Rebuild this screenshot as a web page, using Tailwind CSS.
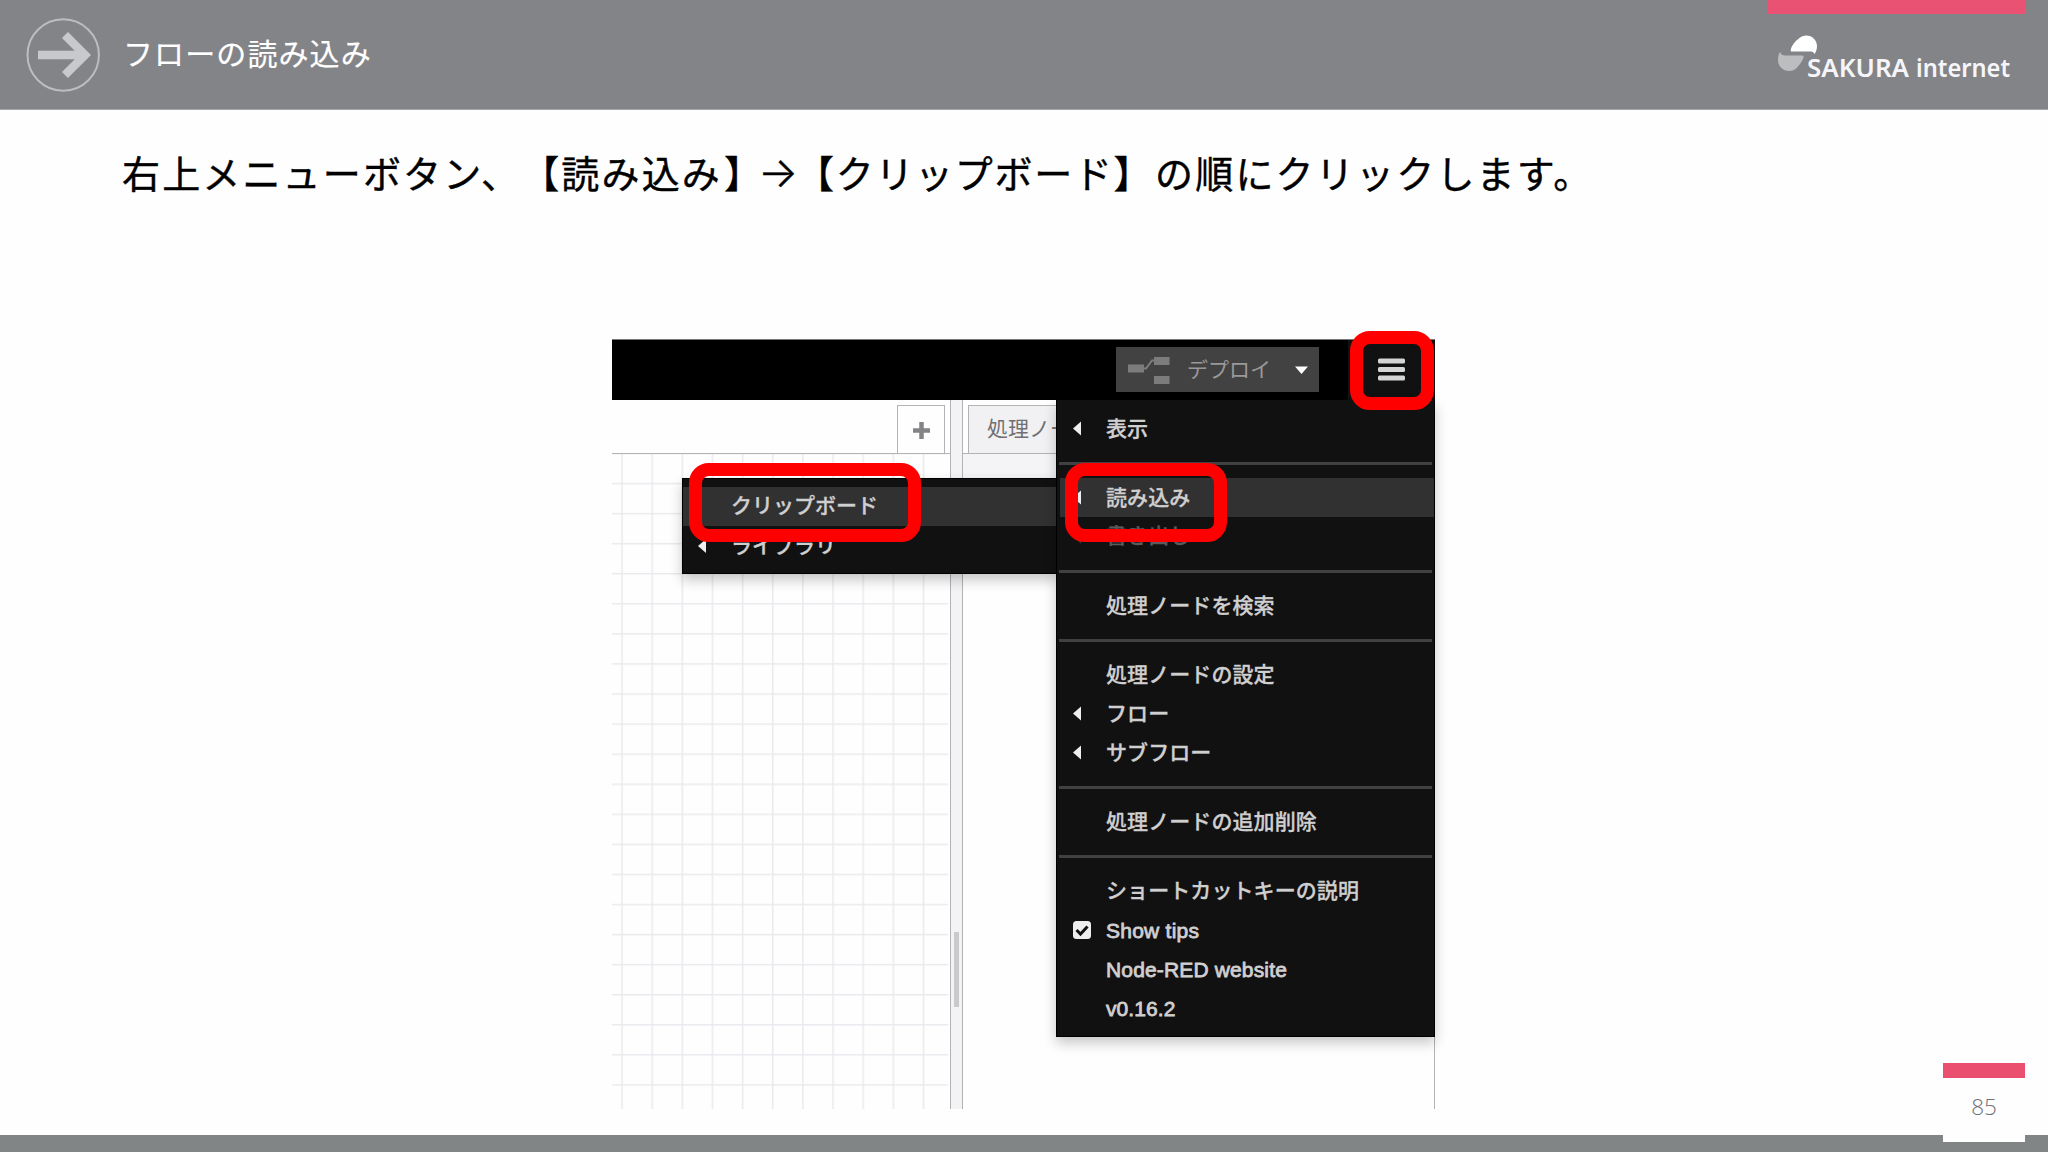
<!DOCTYPE html>
<html lang="ja">
<head>
<meta charset="utf-8">
<title>フローの読み込み</title>
<script src="https://cdn.jsdelivr.net/npm/@tailwindcss/browser@4"></script>
</head>
<body class="w-[2048px] h-[1152px] overflow-hidden bg-[#fefefe] font-['Noto_Sans_CJK_JP',sans-serif]">
<div class="relative flex flex-col w-[2048px] h-[1152px]">

  <header class="flex h-[110px] shrink-0 justify-between border-b border-[#a5a6a9] bg-[#838488] pl-[26px] pr-[22px]">
    <div class="flex items-center">
      <svg class="size-[75px]" viewBox="0 0 75 75" fill="none">
        <circle cx="37.200" cy="38" r="35.700" stroke="#bcbdc0" stroke-width="2"/>
        <path d="M12 38H58" stroke="#c8c9cc" stroke-width="8.500"/>
        <path d="M39 18L59 38L39 58" stroke="#c8c9cc" stroke-width="8.500"/>
      </svg>
      <h1 class="mb-[5px] ml-[22px] text-[30px] leading-[40px] tracking-[1.100px] text-white [-webkit-text-stroke:0.200px_#fff]">フローの読み込み</h1>
    </div>
    <div class="flex w-[259px] flex-col">
      <div class="h-[14px] bg-[#ea5273]"></div>
      <svg class="h-[70px] w-[259px]" viewBox="1767 14 259 70">
        <path d="M1791 51.500C1789.500 47 1799 35.500 1806 35.500C1812.500 35.500 1817 40.500 1817 46C1817 49.500 1816 52 1814.500 54C1813.500 51.800 1812.500 51.500 1810 51.500Z" fill="#fff"/>
        <path d="M1780 52C1781 54.500 1782.500 55.500 1785 55.500H1801.500C1804.500 55.500 1804 57.500 1802.500 60C1799 66 1795.500 71 1789.500 71C1783 71 1778 66 1778 60.500C1778 57 1778.500 54 1780 52Z" fill="#bcbdbf"/>
        <g font-family="Noto Sans" font-weight="600" font-size="24.500" fill="#f6f6fa">
          <text x="1807" y="77" textLength="102" lengthAdjust="spacingAndGlyphs">SAKURA</text>
          <text x="1916" y="77" textLength="94" lengthAdjust="spacingAndGlyphs">internet</text>
        </g>
      </svg>
    </div>
  </header>

  <main class="flex flex-1 flex-col">
    <p class="mt-[34px] ml-[122px] flex h-[56px] items-center text-[38px] leading-[56px] whitespace-nowrap text-black [-webkit-text-stroke:0.400px_#000] [text-spacing-trim:space-all]">
      <span class="w-[602px] tracking-[2.150px]">右上メニューボタン、【読み込み</span>
      <span class="w-[34px] [font-feature-settings:'halt']">】</span>
      <span class="w-[38px] font-['Inter',sans-serif] text-[42px] font-light">→</span>
      <span class="w-[359px] tracking-[1.700px]">【クリップボード】</span>
      <span class="tracking-[2.200px]">の順にクリックします。</span>
    </p>

    <!-- editor window -->
    <section class="relative mt-[139px] ml-[612px] flex h-[770px] w-[823px] flex-col overflow-visible">
      <div class="flex h-[61px] shrink-0 items-start justify-end border-t border-[#777] bg-black">
        <div class="mt-[7px] flex h-[45px] w-[203px] items-center bg-[#434243]">
          <svg class="ml-[11px] h-[28px] w-[43px]" viewBox="0 0 43 28">
            <path d="M15 12.500H19L25 4.500H28" fill="none" stroke="#7d7c7d" stroke-width="2"/>
            <path d="M1 8.500H17V16.500H1ZM27 1H42.500V9H27ZM27 20H42.500V28H27Z" fill="#7d7c7d"/>
          </svg>
          <span class="mb-[2px] ml-[17px] w-[86px] text-[21px] leading-[43px] text-[#9a999a]">デプロイ</span>
          <svg class="ml-[22px] h-[8px] w-[13px]" viewBox="0 0 13 8"><path d="M0 0.500H13L6.500 8Z" fill="#fff"/></svg>
        </div>
        <div class="ml-[29px] flex h-[60px] w-[87px] items-center justify-center bg-[#121112]">
          <svg class="h-[24px] w-[27px]" viewBox="0 0 27 24" fill="#d5d5d5"><rect y="0.500" width="27" height="5" rx="1.500"/><rect y="9" width="27" height="5" rx="1.500"/><rect y="17.500" width="27" height="5" rx="1.500"/></svg>
        </div>
      </div>

      <div class="flex flex-1">
        <div class="flex w-[339px] flex-col border-r border-[#b3b2b5]">
          <div class="flex h-[54px] items-end justify-end border-b border-[#b3b2b5] pr-[5px]">
            <div class="flex h-[48px] w-[48px] items-center justify-center border border-b-0 border-[#b3b2b5]">
              <svg class="mt-[2px] size-[17px]" viewBox="0 0 17 17"><path d="M8.500 0V17M0 8.500H17" stroke="#848386" stroke-width="4.500"/></svg>
            </div>
          </div>
          <svg class="h-[655px] w-[336px]">
            <defs><pattern id="grid" x="9.200" y="28.800" width="30.150" height="30.070" patternUnits="userSpaceOnUse"><path d="M0.800 0V30.100M0 0.800H30.200" stroke="#ebe9ed" stroke-width="1.500"/></pattern></defs>
            <rect width="336" height="655" fill="url(#grid)"/>
          </svg>
        </div>
        <div class="flex w-[11px] items-start justify-center bg-[#f3f2f4] pt-[532px]">
          <div class="h-[75px] w-[5px] bg-[#cac9cb]"></div>
        </div>
        <div class="flex flex-1 flex-col border-x border-[#b3b2b5]">
          <div class="flex h-[54px] items-end border-b border-[#b3b2b5] pl-[5px]">
            <div class="h-[48px] w-[120px] border border-b-0 border-[#b3b2b5] bg-[#f1f0f2] pl-[18px] text-[21px] leading-[42px] whitespace-nowrap text-[#707073]">処理ノード</div>
          </div>
          <div class="h-[50px] bg-[#f4f3f5]"></div>
        </div>
      </div>

      <!-- submenu -->
      <ul class="absolute top-[139px] left-[70px] h-[96px] w-[377px] border border-black bg-[#121112] pt-[8px] text-[21px] leading-[35px] font-medium text-[#d0cfd0] shadow-[0_6px_12px_rgba(0,0,0,0.22)] [-webkit-text-stroke:0.300px_#d0cfd0]">
        <li class="h-[39px] bg-[#323132] pl-[48px]">クリップボード</li>
        <li class="flex h-[39px] items-center pl-[15px]"><svg class="mr-[25px] h-[14px] w-[8px]" viewBox="0 0 8 14"><path d="M8 0V14L0 7Z" fill="#eee"/></svg><span class="pb-[2px]">ライブラリ</span></li>
      </ul>

      <!-- main menu -->
      <ul class="absolute top-[61px] left-[444px] flex h-[637px] w-[379px] flex-col border border-t-0 border-black bg-[#121112] pt-[9px] text-[21px] leading-[37px] font-medium tracking-[0.080px] whitespace-nowrap text-[#d0cfd0] shadow-[0_6px_12px_rgba(0,0,0,0.22)] [-webkit-text-stroke:0.300px_currentColor]">
        <li class="flex h-[39px] items-center pl-[16px]"><svg class="mr-[25px] h-[15px] w-[8px]" viewBox="0 0 8 14"><path d="M8 0V14L0 7Z" fill="#eee"/></svg><span class="pb-[2px]">表示</span></li>
        <li class="flex h-[30px] items-center px-[2px]"><hr class="h-[3px] w-full border-0 bg-[#414042]"></li>
        <li class="ml-[3px] flex h-[39px] items-center bg-[#323132] pl-[13px]"><svg class="mr-[25px] h-[15px] w-[8px]" viewBox="0 0 8 14"><path d="M8 0V14L0 7Z" fill="#eee"/></svg><span class="pb-[2px]">読み込み</span></li>
        <li class="flex h-[39px] items-center pl-[16px] text-[#5c5b5c]"><svg class="mr-[25px] h-[15px] w-[8px]" viewBox="0 0 8 14"><path d="M8 0V14L0 7Z" fill="#444"/></svg><span class="pb-[4px]">書き出し</span></li>
        <li class="flex h-[30px] items-center px-[2px]"><hr class="h-[3px] w-full border-0 bg-[#414042]"></li>
        <li class="h-[39px] pl-[49px]">処理ノードを検索</li>
        <li class="flex h-[30px] items-center px-[2px]"><hr class="h-[3px] w-full border-0 bg-[#414042]"></li>
        <li class="h-[39px] pl-[49px]">処理ノードの設定</li>
        <li class="flex h-[39px] items-center pl-[16px]"><svg class="mr-[25px] h-[15px] w-[8px]" viewBox="0 0 8 14"><path d="M8 0V14L0 7Z" fill="#eee"/></svg><span class="pb-[2px]">フロー</span></li>
        <li class="flex h-[39px] items-center pl-[16px]"><svg class="mr-[25px] h-[15px] w-[8px]" viewBox="0 0 8 14"><path d="M8 0V14L0 7Z" fill="#eee"/></svg><span class="pb-[2px]">サブフロー</span></li>
        <li class="flex h-[30px] items-center px-[2px]"><hr class="h-[3px] w-full border-0 bg-[#414042]"></li>
        <li class="h-[39px] pl-[49px]">処理ノードの追加削除</li>
        <li class="flex h-[30px] items-center px-[2px]"><hr class="h-[3px] w-full border-0 bg-[#414042]"></li>
        <li class="h-[39px] pl-[49px]">ショートカットキーの説明</li>
        <li class="flex h-[39px] items-center pl-[16px] font-['Liberation_Sans',sans-serif] font-normal tracking-[0.250px] [-webkit-text-stroke:0.800px_#d0cfd0]">
          <svg class="mr-[15px] size-[18px]" viewBox="0 0 18 18"><rect width="18" height="18" rx="3.500" fill="#efeeef"/><path d="M3.500 9L7.500 13L14.500 5.500" fill="none" stroke="#121112" stroke-width="3"/></svg><span class="pt-[2px]">Show tips</span></li>
        <li class="h-[39px] pl-[49px] font-['Liberation_Sans',sans-serif] leading-[41px] font-normal tracking-[0.150px] [-webkit-text-stroke:0.800px_#d0cfd0]">Node-RED website</li>
        <li class="h-[39px] pl-[49px] font-['Liberation_Sans',sans-serif] leading-[41px] font-normal [-webkit-text-stroke:0.800px_#d0cfd0]">v0.16.2</li>
      </ul>

      <!-- highlight frames -->
      <div class="absolute -top-[8px] left-[738px] h-[79px] w-[84px] rounded-[20px] border-[13px] border-[#fe0000]"></div>
      <div class="absolute top-[124px] left-[453px] h-[79px] w-[162px] rounded-[20px] border-[13px] border-[#fe0000]"></div>
      <div class="absolute top-[124px] left-[77px] h-[79px] w-[232px] rounded-[20px] border-[13px] border-[#fe0000]"></div>
    </section>
  </main>

  <footer class="h-[17px] shrink-0 bg-[#828585]"></footer>

  <!-- page number tab over the footer -->
  <div class="absolute top-[1063px] left-[1943px] flex h-[79px] w-[82px] flex-col bg-[#fefefe]">
    <div class="h-[15px] bg-[#ea4f70]"></div>
    <div class="flex flex-1 items-center justify-center pb-[6px] font-['Open_Sans',sans-serif] text-[22.500px] font-light text-[#6f6f72]">85</div>
  </div>
</div>
</body>
</html>
